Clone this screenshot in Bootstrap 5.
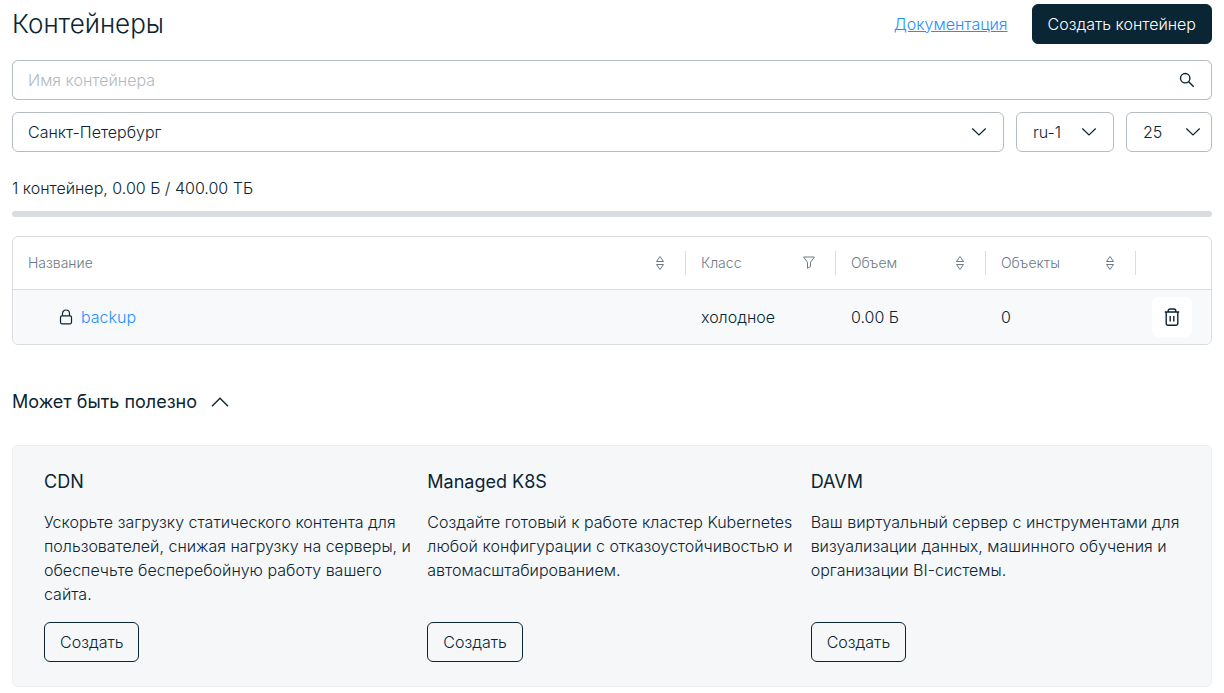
<!DOCTYPE html>
<html lang="ru">
<head>
<meta charset="utf-8">
<meta name="viewport" content="width=device-width, initial-scale=1">
<title>Контейнеры</title>
<link href="https://cdn.jsdelivr.net/npm/bootstrap@5.3.0/dist/css/bootstrap.min.css" rel="stylesheet">
<style>
  :root { --ink: #0a2533; --line: #d9dde0; --field: #b5bcc2; --muted: #6c7a84; --accent: #2490ff; }
  body { font-family: Inter, "Open Sans", sans-serif; font-size: 16px; line-height: 24px; font-weight: 300; color: var(--ink); background: #fff; }
  svg { display: block; fill: none; stroke: currentColor; }
  .page { padding: 4px 12px 6px; }
  .page-title { font-size: 26px; line-height: 40px; font-weight: 300; }
  a { color: var(--accent); }
  .btn { height: 40px; padding: 0 15px; border-radius: 6px; font-size: 16px; font-weight: 300; line-height: 24px; white-space: nowrap; }
  .btn-ink { --bs-btn-bg: #0a2533; --bs-btn-color: #fff; --bs-btn-border-color: #0a2533; --bs-btn-hover-bg: #17394a; --bs-btn-hover-color: #fff; }
  .btn-line { --bs-btn-color: #0a2533; --bs-btn-border-color: #0a2533; --bs-btn-hover-bg: #0a2533; --bs-btn-hover-color: #fff; }
  .form-control, .form-select { height: 40px; padding: 0 15px; border-color: var(--field); border-radius: 6px; color: var(--ink); font-size: 16px; font-weight: 300; }
  .form-control::placeholder { color: #b3babf; }
  .btn-search { border-color: var(--field); padding: 0 16px; color: var(--ink); }
  .form-select { background-size: 16px 16px; background-position: right 16px center;
    background-image: url("data:image/svg+xml,%3Csvg xmlns='http://www.w3.org/2000/svg' viewBox='0 0 16 16'%3E%3Cpath fill='none' stroke='%230a2533' stroke-width='1.2' d='M1.300 4.500 8 11l6.700-6.500'/%3E%3C/svg%3E"); }
  .select-zone, .select-count { padding-left: 16px; }
  .select-zone { width: 98px; }
  .select-count { width: 86px; background-position: right 10px center; }
  .gap-12 { gap: 12px; }
  .mt-12 { margin-top: 12px; }
  .quota-text { margin: 24px 0 11px; }
  .quota { height: 6px; border-radius: 3px; background: var(--line); }
  .frame { margin-top: 19px; border: 1px solid var(--line); border-radius: 6px; overflow: hidden; }
  .data-table { width: 100%; table-layout: fixed; }
  .data-table th { height: 52px; padding: 0; font-size: 14px; font-weight: 300; color: var(--muted); border-bottom: 1px solid var(--line); }
  .data-table td { height: 55px; padding: 0 15px; background: #f7f9fb; }
  .data-table td.name-cell { padding-left: 46px; }
  .data-table td.action-cell { padding: 0 16px; }
  .head-cell { height: 24px; padding: 0 20px 0 15px; border-right: 1px solid var(--line); }
  .w-data { width: 150px; }
  .w-action { width: 75px; }
  .btn-trash { width: 40px; padding: 0; background: #fff; color: var(--ink); border: 0; }
  .section-head { gap: 14px; padding: 45px 0 31px; }
  .section-title { font-size: 18px; line-height: 24px; font-weight: 400; }
  .btn-fold { height: 24px; padding: 0; border: 0; color: var(--ink); }
  .offers { padding: 24px 25px 24px 31px; background: #f5f7f9; border: 1px solid #eceef0; border-radius: 6px; }
</style>
</head>
<body>
<main class="page">
  <header class="d-flex align-items-center justify-content-between mb-3">
    <h1 class="page-title mb-0">Контейнеры</h1>
    <div class="d-flex align-items-center gap-4">
      <a href="#">Документация</a>
      <button type="button" class="btn btn-ink">Создать контейнер</button>
    </div>
  </header>

  <form role="search">
    <div class="input-group">
      <input type="search" class="form-control border-end-0" placeholder="Имя контейнера" aria-label="Имя контейнера">
      <button type="submit" class="btn btn-search border-start-0" aria-label="Найти">
        <svg width="16" height="16" viewBox="0 0 16 16" stroke-width="1.4"><circle cx="6.200" cy="6.200" r="4.700"/><path d="m9.700 9.700 5 5"/></svg>
      </button>
    </div>
    <div class="d-flex gap-12 mt-12">
      <select class="form-select flex-fill" aria-label="Регион"><option>Санкт-Петербург</option></select>
      <select class="form-select select-zone flex-shrink-0" aria-label="Зона"><option>ru-1</option></select>
      <select class="form-select select-count flex-shrink-0" aria-label="На странице"><option>25</option></select>
    </div>
  </form>

  <p class="quota-text">1 контейнер, 0.00 Б / 400.00 ТБ</p>
  <div class="quota" role="progressbar" aria-label="Использовано" aria-valuenow="0" aria-valuemin="0" aria-valuemax="400"></div>

  <div class="frame">
    <table class="data-table">
      <thead>
        <tr>
          <th scope="col"><div class="head-cell d-flex align-items-center justify-content-between">Название
            <svg width="10" height="16" viewBox="0 0 10 16"><path d="M5 1.500 8.500 6.500H1.500zM5 14.500 8.500 9.500H1.500z" stroke-linejoin="round"/></svg></div></th>
          <th scope="col" class="w-data"><div class="head-cell d-flex align-items-center justify-content-between">Класс
            <svg width="12" height="13" viewBox="0 0 12 13"><path d="M.6 1h10.800L7.500 6.300V10.500L4.500 12.300V6.300z" stroke-linejoin="round"/></svg></div></th>
          <th scope="col" class="w-data"><div class="head-cell d-flex align-items-center justify-content-between">Объем
            <svg width="10" height="16" viewBox="0 0 10 16"><path d="M5 1.500 8.500 6.500H1.500zM5 14.500 8.500 9.500H1.500z" stroke-linejoin="round"/></svg></div></th>
          <th scope="col" class="w-data"><div class="head-cell d-flex align-items-center justify-content-between">Объекты
            <svg width="10" height="16" viewBox="0 0 10 16"><path d="M5 1.500 8.500 6.500H1.500zM5 14.500 8.500 9.500H1.500z" stroke-linejoin="round"/></svg></div></th>
          <th class="w-action"></th>
        </tr>
      </thead>
      <tbody>
        <tr>
          <td class="name-cell"><div class="d-flex align-items-center gap-2">
            <svg width="14" height="16" viewBox="0 0 14 16" stroke-width="1.200"><rect x="1.500" y="6.800" width="11" height="8" rx="1.500"/><path d="M3.500 6.800V4.500a3.500 3.500 0 0 1 7 0v2.300"/></svg>
            <a href="#" class="text-decoration-none">backup</a></div></td>
          <td>холодное</td>
          <td>0.00 Б</td>
          <td>0</td>
          <td class="action-cell"><button type="button" class="btn btn-trash d-flex align-items-center justify-content-center" aria-label="Удалить">
            <svg width="16" height="18" viewBox="0 0 16 18" stroke-width="1.400"><path d="M.8 4h14.400M4.200 4V3a2 2 0 0 1 2-2h3.600a2 2 0 0 1 2 2v1M2.200 4v11.500a1.700 1.700 0 0 0 1.700 1.700h8.200a1.700 1.700 0 0 0 1.700-1.700V4M6.200 8v5.500M9.800 8v5.500"/></svg>
          </button></td>
        </tr>
      </tbody>
    </table>
  </div>

  <section>
    <div class="section-head d-flex align-items-center">
      <h2 class="section-title mb-0">Может быть полезно</h2>
      <button type="button" class="btn btn-fold" data-bs-toggle="collapse" data-bs-target="#offers" aria-expanded="true" aria-controls="offers" aria-label="Свернуть">
        <svg width="18" height="10" viewBox="0 0 18 10" stroke-width="1.400"><path d="M1 9.200 9 1.200l8 8"/></svg>
      </button>
    </div>
    <div class="collapse show" id="offers">
      <div class="offers">
        <div class="row gx-2">
          <div class="col-4 d-flex flex-column align-items-start">
            <h3 class="section-title mb-3">CDN</h3>
            <p class="mb-3">Ускорьте загрузку статического контента для пользователей, снижая нагрузку на серверы, и обеспечьте бесперебойную работу вашего сайта.</p>
            <button type="button" class="btn btn-line mt-auto">Создать</button>
          </div>
          <div class="col-4 d-flex flex-column align-items-start">
            <h3 class="section-title mb-3">Managed K8S</h3>
            <p class="mb-3">Создайте готовый к работе кластер Kubernetes любой конфигурации с отказоустойчивостью и автомасштабированием.</p>
            <button type="button" class="btn btn-line mt-auto">Создать</button>
          </div>
          <div class="col-4 d-flex flex-column align-items-start">
            <h3 class="section-title mb-3">DAVM</h3>
            <p class="mb-3">Ваш виртуальный сервер с инструментами для визуализации данных, машинного обучения и организации BI-системы.</p>
            <button type="button" class="btn btn-line mt-auto">Создать</button>
          </div>
        </div>
      </div>
    </div>
  </section>
</main>
<script src="https://cdn.jsdelivr.net/npm/bootstrap@5.3.0/dist/js/bootstrap.bundle.min.js"></script>
</body>
</html>
